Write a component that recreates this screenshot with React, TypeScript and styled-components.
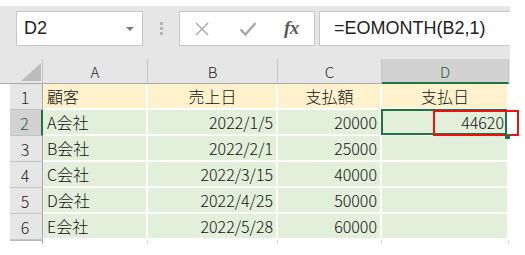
import React from "react"
import styled, { createGlobalStyle } from "styled-components"

const GlobalStyle = createGlobalStyle`
  html, body {
    margin: 0;
    padding: 0;
    background: #fff;
  }
  body {
    font-family: "Noto Sans CJK JP", "Noto Sans", sans-serif;
  }
`

const COLS = "43px 105px 130px 104px 127px"

const Page = styled.div`
  width: 510px;
  padding-top: 6px;
  display: flex;
  flex-direction: column;
`

const Toolbar = styled.div`
  background: #e6e6e6;
  height: 53px;
  padding: 5px 0 0 16px;
  box-sizing: border-box;
  display: flex;
  align-items: flex-start;
`

const NameBox = styled.div`
  width: 127px;
  height: 35px;
  box-sizing: border-box;
  background: #fff;
  border: 1px solid #c6c6c6;
  display: flex;
  align-items: center;
  justify-content: space-between;
  padding: 0 8px 0 7px;
  font-family: "Liberation Sans", Arial, sans-serif;
  font-size: 18px;
  color: #222;
`

const DropArrow = styled.span`
  width: 0;
  height: 0;
  border-left: 4px solid transparent;
  border-right: 4px solid transparent;
  border-top: 4px solid #7a7a7a;
  margin-top: 1px;
`

const Grip = styled.div`
  width: 3px;
  margin: 11px 16px 0 17px;
  display: flex;
  flex-direction: column;
  gap: 2px;
  span {
    width: 3px;
    height: 3px;
    background: #b4b4b4;
  }
`

const ButtonBox = styled.div`
  width: 136px;
  height: 35px;
  box-sizing: border-box;
  background: #fff;
  border: 1px solid #c6c6c6;
  display: flex;
  align-items: center;
  padding-left: 14px;
`

const IconSlot = styled.div<{ $w: number }>`
  width: ${(p) => p.$w}px;
  display: flex;
  align-items: center;
`

const Fx = styled.span`
  font-family: "Liberation Serif", "Times New Roman", serif;
  font-style: italic;
  font-weight: bold;
  font-size: 19px;
  color: #5a5a5a;
  letter-spacing: -0.5px;
  margin-top: -2px;
`

const FormulaBox = styled.div`
  flex: 1;
  margin-left: 4px;
  height: 35px;
  box-sizing: border-box;
  background: #fff;
  border: 1px solid #c6c6c6;
  border-right: none;
  display: flex;
  align-items: center;
  padding-left: 14px;
  font-family: "Liberation Sans", Arial, sans-serif;
  font-size: 18px;
  color: #222;
`

const HeaderRow = styled.div`
  display: grid;
  grid-template-columns: ${COLS} 1px;
  height: 25px;
  background: #e6e6e6;
`

const Corner = styled.div`
  position: relative;
  border-bottom: 1px solid #ababab;
  border-right: 1px solid #c4c4c4;
  box-sizing: border-box;
  svg {
    position: absolute;
    right: 1px;
    bottom: 2px;
  }
`

const ColHead = styled.div<{ $active?: boolean }>`
  box-sizing: border-box;
  display: flex;
  align-items: center;
  justify-content: center;
  font-size: 15px;
  font-weight: 300;
  line-height: 1;
  background: ${(p) => (p.$active ? "#d2d2d2" : "#e6e6e6")};
  color: ${(p) => (p.$active ? "#1d5b3a" : "#222")};
  border-right: 1px solid #c4c4c4;
  border-bottom: ${(p) => (p.$active ? "2px solid #217346" : "1px solid #ababab")};
  padding-top: 1px;
`

const Row = styled.div<{ $h?: number }>`
  display: grid;
  grid-template-columns: ${COLS};
  height: ${(p) => p.$h ?? 26}px;
`

const RowHead = styled.div<{ $active?: boolean }>`
  margin-left: 10px;
  box-sizing: border-box;
  display: flex;
  align-items: center;
  justify-content: center;
  font-size: 16px;
  font-weight: 300;
  line-height: 1;
  background: ${(p) => (p.$active ? "#d2d2d2" : "#e6e6e6")};
  color: ${(p) => (p.$active ? "#1d5b3a" : "#222")};
  border-bottom: 1px solid #c4c4c4;
  border-right: ${(p) => (p.$active ? "2px solid #217346" : "1px solid #ababab")};
  padding-right: 2px;
`

const Cell = styled.div<{ $fill: string; $align: "left" | "right" | "center" }>`
  position: relative;
  box-sizing: border-box;
  display: flex;
  align-items: center;
  justify-content: ${(p) =>
    p.$align === "left" ? "flex-start" : p.$align === "right" ? "flex-end" : "center"};
  padding: 0 3px 1px 4px;
  background: ${(p) => p.$fill};
  border-right: 2px solid #fff;
  border-bottom: 2px solid #fff;
  font-size: 16px;
  font-weight: 300;
  line-height: 1;
  color: #111;
  white-space: nowrap;
`

const ActiveCell = styled(Cell)`
  z-index: 2;
  &::after {
    content: "";
    position: absolute;
    left: -1px;
    top: -1px;
    right: 0;
    bottom: -1px;
    border: 2px solid #217346;
    pointer-events: none;
  }
`

const Highlight = styled.div`
  position: absolute;
  left: 51px;
  top: 0;
  width: 86px;
  height: 26px;
  box-sizing: border-box;
  border: 2px solid #ee1111;
  z-index: 3;
`

const FillHandle = styled.div`
  position: absolute;
  left: 123px;
  top: 24px;
  width: 5px;
  height: 5px;
  background: #217346;
  z-index: 4;
`

const StubHead = styled.div`
  margin-left: 10px;
  border-top: 1px solid #b8b8b8;
  border-right: 1px solid #ababab;
`

const StubCell = styled.div`
  border-right: 1px solid #dadada;
`

const HEADER_FILL = "#fff2cc"
const DATA_FILL = "#e2efda"

const rows = [
  ["A会社", "2022/1/5", "20000"],
  ["B会社", "2022/2/1", "25000"],
  ["C会社", "2022/3/15", "40000"],
  ["D会社", "2022/4/25", "50000"],
  ["E会社", "2022/5/28", "60000"],
]

export default function App() {
  return (
    <>
      <GlobalStyle />
      <Page>
        <Toolbar>
          <NameBox>
            <span>D2</span>
            <DropArrow />
          </NameBox>
          <Grip>
            <span />
            <span />
            <span />
          </Grip>
          <ButtonBox>
            <IconSlot $w={45}>
              <svg width="16" height="16" viewBox="0 0 16 16">
                <path d="M2 2 L14 14 M14 2 L2 14" stroke="#a8a8a8" strokeWidth="1.4" fill="none" />
              </svg>
            </IconSlot>
            <IconSlot $w={45}>
              <svg width="18" height="16" viewBox="0 0 18 16">
                <path d="M1.5 8.5 L6.5 13.5 L16.5 2" stroke="#a8a8a8" strokeWidth="2.4" fill="none" />
              </svg>
            </IconSlot>
            <IconSlot $w={30}>
              <Fx>fx</Fx>
            </IconSlot>
          </ButtonBox>
          <FormulaBox>=EOMONTH(B2,1)</FormulaBox>
        </Toolbar>

        <HeaderRow>
          <Corner>
            <svg width="20" height="18" viewBox="0 0 20 18">
              <polygon points="20,0 20,18 0,18" fill="#bcbcbc" />
            </svg>
          </Corner>
          <ColHead>A</ColHead>
          <ColHead>B</ColHead>
          <ColHead>C</ColHead>
          <ColHead $active>D</ColHead>
          <div />
        </HeaderRow>

        <Row>
          <RowHead>1</RowHead>
          <Cell $fill={HEADER_FILL} $align="left">顧客</Cell>
          <Cell $fill={HEADER_FILL} $align="center">売上日</Cell>
          <Cell $fill={HEADER_FILL} $align="center">支払額</Cell>
          <Cell $fill={HEADER_FILL} $align="center">支払日</Cell>
        </Row>

        {rows.map((r, i) => (
          <Row key={r[0]}>
            <RowHead $active={i === 0}>{i + 2}</RowHead>
            <Cell $fill={DATA_FILL} $align="left">{r[0]}</Cell>
            <Cell $fill={DATA_FILL} $align="right">{r[1]}</Cell>
            <Cell $fill={DATA_FILL} $align="right">{r[2]}</Cell>
            {i === 0 ? (
              <ActiveCell $fill={DATA_FILL} $align="right">
                44620
                <Highlight />
                <FillHandle />
              </ActiveCell>
            ) : (
              <Cell $fill={DATA_FILL} $align="right" />
            )}
          </Row>
        ))}

        <Row $h={4}>
          <StubHead />
          <StubCell />
          <StubCell />
          <StubCell />
          <StubCell />
        </Row>
      </Page>
    </>
  )
}
